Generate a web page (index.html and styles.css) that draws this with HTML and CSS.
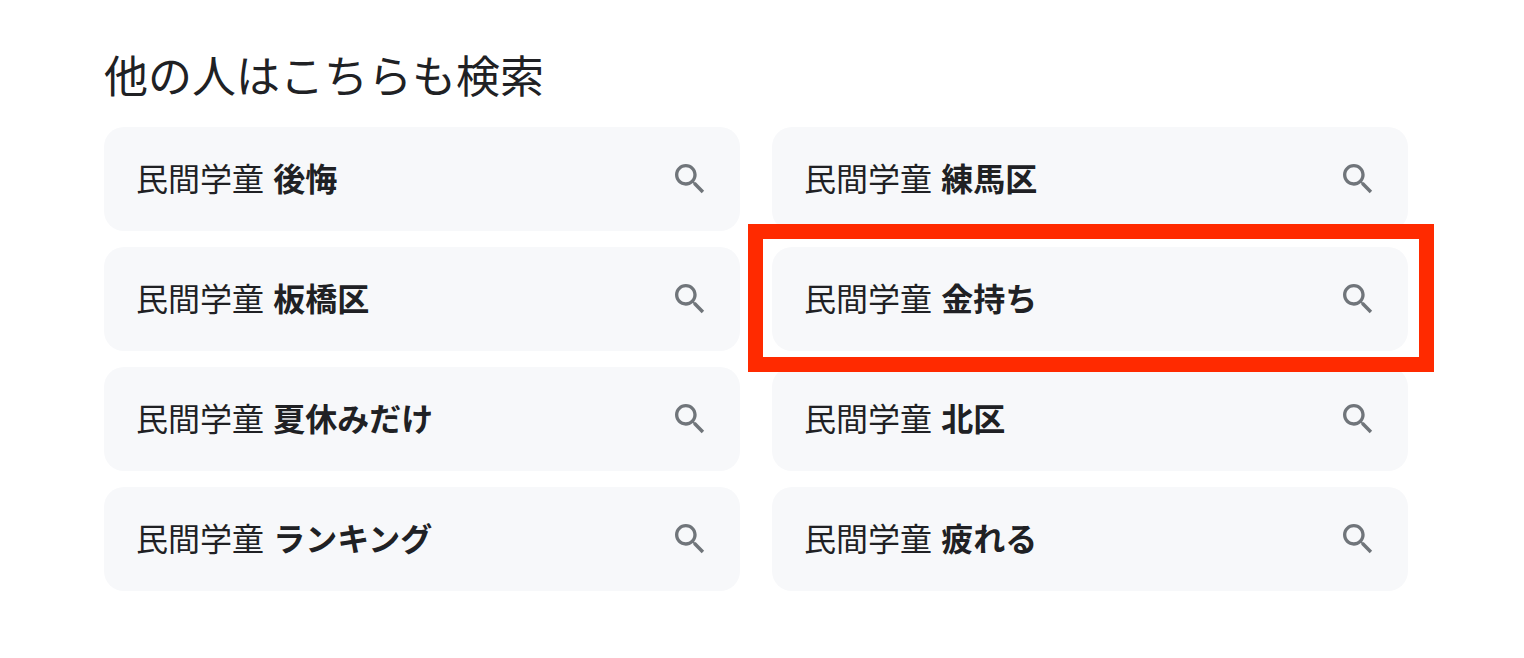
FILE: index.html
```html
<!DOCTYPE html>
<html lang="ja">
<head>
  <meta charset="UTF-8" />
  <title>他の人はこちらも検索</title>
  <link rel="stylesheet" href="styles.css">
</head>
<body>
  <svg class="icon-defs" width="0" height="0">
    <symbol id="search-icon" viewBox="0 0 24 24">
      <path d="M15.5 14h-.79l-.28-.27C15.41 12.59 16 11.11 16 9.5 16 5.91 13.09 3 9.5 3S3 5.91 3 9.5 5.91 16 9.5 16c1.61 0 3.09-.59 4.23-1.57l.27.28v.79l5 4.99L20.49 19l-4.99-5zm-6 0C7.01 14 5 11.99 5 9.5S7.01 5 9.5 5 14 7.01 14 9.5 11.99 14 9.5 14z"/>
    </symbol>
  </svg>

  <section class="related">
    <h2>他の人はこちらも検索</h2>
    <div class="related-grid">
      <a class="chip"><span class="chip-text">民間学童 <b>後悔</b></span><svg class="search"><use href="#search-icon"/></svg></a>
      <a class="chip"><span class="chip-text">民間学童 <b>練馬区</b></span><svg class="search"><use href="#search-icon"/></svg></a>
      <a class="chip"><span class="chip-text">民間学童 <b>板橋区</b></span><svg class="search"><use href="#search-icon"/></svg></a>
      <a class="chip highlighted"><span class="chip-text">民間学童 <b>金持ち</b></span><svg class="search"><use href="#search-icon"/></svg></a>
      <a class="chip"><span class="chip-text">民間学童 <b>夏休みだけ</b></span><svg class="search"><use href="#search-icon"/></svg></a>
      <a class="chip"><span class="chip-text">民間学童 <b>北区</b></span><svg class="search"><use href="#search-icon"/></svg></a>
      <a class="chip"><span class="chip-text">民間学童 <b>ランキング</b></span><svg class="search"><use href="#search-icon"/></svg></a>
      <a class="chip"><span class="chip-text">民間学童 <b>疲れる</b></span><svg class="search"><use href="#search-icon"/></svg></a>
    </div>
  </section>
</body>
</html>
```

FILE: styles.css
```css
* {
  box-sizing: border-box;
  margin: 0;
  padding: 0;
}

body {
  background-color: white;
  color: #202124;
  font-family: 'Noto Sans CJK JP', 'Noto Sans', sans-serif;
}

.icon-defs {
  position: absolute;
}

.related {
  padding: 44px 116px 0 104px;
}

h2 {
  font-size: 44px;
  font-weight: 400;
  line-height: 60px;
  margin-bottom: 23px;
}

.related-grid {
  display: grid;
  grid-template-columns: 636px 636px;
  column-gap: 32px;
  row-gap: 16px;
}

.chip {
  position: relative;
  display: flex;
  justify-content: space-between;
  align-items: center;
  height: 104px;
  padding: 0 30px 0 32px;
  background-color: #f7f8fa;
  border-radius: 20px;
  font-size: 32px;
}

.chip-text {
  margin-bottom: 4px;
}

.chip b {
  font-weight: 700;
  margin-left: 2px;
}

.search {
  width: 40px;
  height: 40px;
  fill: #70757a;
}

/* red marker drawn over the screenshot */
.highlighted {
  z-index: 1;
}

.highlighted::after {
  content: '';
  position: absolute;
  top: -23px;
  right: -26px;
  bottom: -21px;
  left: -24px;
  border: 15px solid #ff2a00;
}
```
